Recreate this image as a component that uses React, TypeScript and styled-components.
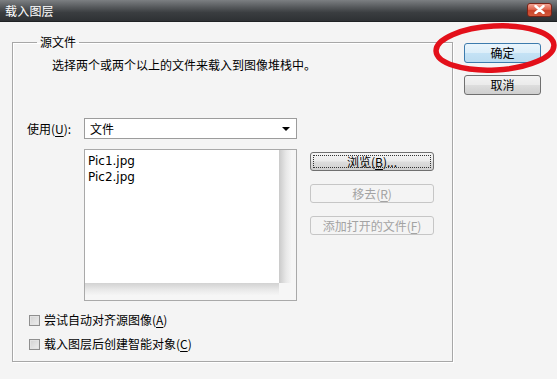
import React from 'react'
import styled, { createGlobalStyle } from 'styled-components'

const GlobalStyle = createGlobalStyle`
  html, body {
    margin: 0;
    padding: 0;
    background: #f4f4f4;
  }
  body {
    font-family: "Noto Sans CJK SC", "DejaVu Sans", sans-serif;
    font-size: 12px;
    color: #000;
  }
`

const Window = styled.div`
  position: relative;
  width: 557px;
  height: 379px;
  overflow: hidden;
  display: flex;
  flex-direction: column;
  background: #f4f4f4;
`

const TitleBar = styled.div`
  height: 22px;
  flex: none;
  display: flex;
  align-items: center;
  justify-content: space-between;
  padding: 0 5px 0 5px;
  box-sizing: border-box;
  background: linear-gradient(to bottom, #7c7f82 0%, #55585b 35%, #3a3d40 60%, #2e3134 100%);
  border-bottom: 1px solid #1f2224;
`

const Title = styled.span`
  color: #fff;
  font-size: 12px;
  line-height: 14px;
  letter-spacing: 0.2px;
`

const CloseButton = styled.div`
  width: 25px;
  height: 14px;
  margin-top: -2px;
  border: 1px solid #7a2418;
  border-radius: 3px;
  background: linear-gradient(to bottom, #f2a393 0%, #e0644c 45%, #c9432a 55%, #d45a3c 100%);
  display: flex;
  align-items: center;
  justify-content: center;
  box-sizing: border-box;
`

const Body = styled.div`
  display: flex;
  align-items: flex-start;
  padding: 13px 0 0 12px;
`

const Group = styled.fieldset`
  margin: 0;
  width: 441px;
  box-sizing: border-box;
  border: 1px solid #a7a7a7;
  box-shadow: inset 1px 1px 0 #fff, 1px 1px 0 #fff;
  padding: 0 18px 9px 14px;
`

const Legend = styled.legend`
  margin-left: 10px;
  padding: 0 3px;
  font-size: 12px;
  line-height: 14px;
`

const Description = styled.div`
  margin: 8px 0 0 25px;
  line-height: 16px;
`

const UseRow = styled.div`
  display: flex;
  align-items: center;
  margin-top: 45px;
`

const Label = styled.span`
  width: 57px;
  line-height: 16px;
`

const Underline = styled.span`
  text-decoration: underline;
  text-underline-offset: 2px;
`

const Select = styled.div`
  width: 213px;
  height: 21px;
  box-sizing: border-box;
  border: 1px solid #9c9c9c;
  background: #fff;
  display: flex;
  align-items: center;
  justify-content: space-between;
  padding: 0 6px 0 5px;
`

const Arrow = styled.span`
  width: 0;
  height: 0;
  border-left: 4px solid transparent;
  border-right: 4px solid transparent;
  border-top: 4px solid #000;
`

const MainRow = styled.div`
  display: flex;
  margin-top: 10px;
  padding-left: 57px;
`

const ListBox = styled.div`
  width: 213px;
  height: 152px;
  box-sizing: border-box;
  border: 1px solid #a9a9a9;
  background: #f6f6f6;
  display: grid;
  grid-template-columns: 1fr 12px 5px;
  grid-template-rows: 1fr 12px 5px;
`

const ListContent = styled.div`
  background: #fff;
  padding: 3px 3px;
  line-height: 16px;
  font-family: "DejaVu Sans", "Noto Sans CJK SC", sans-serif;
  font-size: 12px;
`

const ListShadeV = styled.div`
  background: linear-gradient(to right, #cacaca, #e8e8e8 60%, #f4f4f4);
`

const ListShadeH = styled.div`
  grid-column: 1 / 2;
  background: linear-gradient(to bottom, #d2d2d2, #eaeaea 60%, #f5f5f5);
`

const ButtonColumn = styled.div`
  display: flex;
  flex-direction: column;
  gap: 13px;
  margin-left: 13px;
  padding-top: 3px;
`

const Button = styled.div<{ $disabled?: boolean; $focused?: boolean; $default?: boolean; $width?: number }>`
  width: ${(p) => p.$width ?? 124}px;
  height: ${(p) => (p.$width ? 20 : 19)}px;
  box-sizing: border-box;
  border: 1px solid ${(p) => (p.$disabled ? '#c6c6c6' : p.$default ? '#3d7bad' : '#707070')};
  border-radius: 3px;
  background: ${(p) =>
    p.$disabled
      ? '#f4f4f4'
      : p.$default
      ? 'linear-gradient(to bottom, #eaf5fc 0%, #dceef9 48%, #c4e2f5 52%, #bcdcf0 100%)'
      : 'linear-gradient(to bottom, #f3f3f3 0%, #ebebeb 48%, #dddddd 52%, #cfcfcf 100%)'};
  color: ${(p) => (p.$disabled ? '#a3a3a3' : '#000')};
  display: flex;
  align-items: center;
  justify-content: center;
  line-height: 14px;
  position: relative;
  ${(p) =>
    p.$focused
      ? `&::after {
    content: '';
    position: absolute;
    inset: 2px;
    border: 1px dotted #333;
  }`
      : ''}
`

const CheckRow = styled.div<{ $first?: boolean }>`
  display: flex;
  align-items: center;
  gap: 4px;
  margin-top: ${(p) => (p.$first ? 11 : 8)}px;
  padding-left: 2px;
  line-height: 16px;
`

const CheckBox = styled.span`
  width: 11px;
  height: 11px;
  box-sizing: border-box;
  border: 1px solid #8f8f8f;
  background: linear-gradient(135deg, #d2d2d2, #eeeeee);
  box-shadow: inset 0 0 0 1px #e3e3e3;
`

const ActionColumn = styled.div`
  display: flex;
  flex-direction: column;
  gap: 12px;
  margin: 8px 0 0 11px;
`

const Mark = styled.svg`
  position: absolute;
  left: 433px;
  top: 22px;
  pointer-events: none;
`

export default function App() {
  return (
    <Window>
      <GlobalStyle />
      <TitleBar>
        <Title>载入图层</Title>
        <CloseButton>
          <svg width="11" height="9" viewBox="0 0 11 9">
            <path d="M1.5 1 L9.5 8 M9.5 1 L1.5 8" stroke="#fff" strokeWidth="2.4" strokeLinecap="round" />
          </svg>
        </CloseButton>
      </TitleBar>
      <Body>
        <Group>
          <Legend>源文件</Legend>
          <Description>选择两个或两个以上的文件来载入到图像堆栈中。</Description>
          <UseRow>
            <Label>
              使用(<Underline>U</Underline>):
            </Label>
            <Select>
              <span>文件</span>
              <Arrow />
            </Select>
          </UseRow>
          <MainRow>
            <ListBox>
              <ListContent>
                <div>Pic1.jpg</div>
                <div>Pic2.jpg</div>
              </ListContent>
              <ListShadeV />
              <div />
              <ListShadeH />
            </ListBox>
            <ButtonColumn>
              <Button $focused>
                浏览(<Underline>B</Underline>)...
              </Button>
              <Button $disabled>
                移去(<Underline>R</Underline>)
              </Button>
              <Button $disabled>
                添加打开的文件(<Underline>F</Underline>)
              </Button>
            </ButtonColumn>
          </MainRow>
          <CheckRow $first>
            <CheckBox />
            <span>
              尝试自动对齐源图像(<Underline>A</Underline>)
            </span>
          </CheckRow>
          <CheckRow>
            <CheckBox />
            <span>
              载入图层后创建智能对象(<Underline>C</Underline>)
            </span>
          </CheckRow>
        </Group>
        <ActionColumn>
          <Button $default $width={77}>确定</Button>
          <Button $width={77}>取消</Button>
        </ActionColumn>
      </Body>
      <Mark width="124" height="54" viewBox="0 0 124 54">
        <ellipse cx="62" cy="26" rx="59" ry="22" fill="none" stroke="#e3101a" strokeWidth="5.5" transform="rotate(-3 62 26)" />
      </Mark>
    </Window>
  )
}
